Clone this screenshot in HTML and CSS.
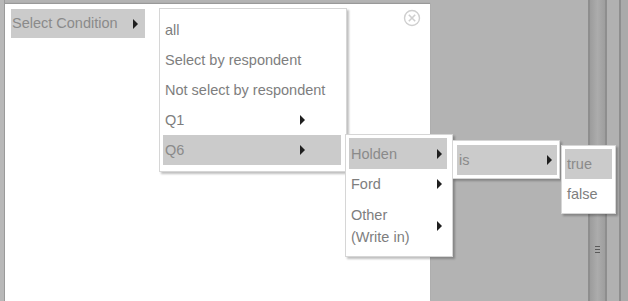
FILE: index.html
```html
<!DOCTYPE html>
<html lang="en">
<head>
    <meta charset="UTF-8">
    <meta name="viewport" content="width=device-width, initial-scale=1.0">
    <title>Select Condition</title>
    <link rel="stylesheet" href="styles.css">
</head>
<body>
    <div class="gutter"></div>
    <div class="panel">
        <svg class="close-icon" width="18" height="18" viewBox="0 0 18 18">
            <circle cx="9" cy="9" r="7.5" fill="none" stroke="#cfcfcf" stroke-width="1.4"/>
            <path d="M5.8 5.8 L12.2 12.2 M12.2 5.8 L5.8 12.2" stroke="#cfcfcf" stroke-width="1.6"/>
        </svg>
        <ul class="root">
            <li class="item active has-sub">Select Condition
                <ul class="menu menu-q">
                    <li class="item">all</li>
                    <li class="item">Select by respondent</li>
                    <li class="item">Not select by respondent</li>
                    <li class="item has-sub">Q1</li>
                    <li class="item active has-sub">Q6
                        <ul class="menu menu-a">
                            <li class="item active has-sub">Holden
                                <ul class="menu menu-op">
                                    <li class="item active has-sub">is
                                        <ul class="menu menu-val">
                                            <li class="item active">true</li>
                                            <li class="item">false</li>
                                        </ul>
                                    </li>
                                </ul>
                            </li>
                            <li class="item has-sub">Ford</li>
                            <li class="item has-sub">Other (Write in)</li>
                        </ul>
                    </li>
                </ul>
            </li>
        </ul>
    </div>
    <div class="canvas"></div>
    <div class="rail">
        <div class="rail-track">
            <span class="grip"></span>
        </div>
        <div class="rail-side"></div>
        <div class="rail-end"></div>
    </div>
</body>
</html>
```

FILE: styles.css
```css
body {
    margin: 0;
    height: 301px;
    display: flex;
    background: #b3b3b3;
    font-family: "Liberation Sans", Arial, sans-serif;
    font-size: 14.5px;
    color: #7e7e7e;
    overflow: hidden;
}
.gutter {
    width: 4px;
    border-right: 1px solid #9a9a9a;
    background: #b8b8b8;
}
.panel {
    position: relative;
    width: 419px;
    margin-top: 4px;
    padding: 5px 0 0 6px;
    background: #fff;
    box-shadow: 0 -1px 1px #999;
    z-index: 2;
}
.canvas {
    flex: 1;
}
.rail {
    display: flex;
    width: 40px;
}
.rail-track {
    width: 15px;
    border-left: 2px solid #8e8e8e;
    border-right: 2px solid #8e8e8e;
    background: linear-gradient(to right, #9c9c9c, #acacac 50%, #9e9e9e);
    display: flex;
    justify-content: center;
    padding-top: 246px;
}
.rail-side {
    width: 12px;
    background: #b1b1b1;
    border-right: 2px solid #8e8e8e;
}
.rail-end {
    flex: 1;
    background: #aaaaaa;
}
.grip {
    width: 5px;
    height: 7px;
    background: repeating-linear-gradient(to bottom, #5a5a5a 0 1px, transparent 1px 3px);
}
.close-icon {
    position: absolute;
    left: 398px;
    top: 5px;
}

ul {
    list-style: none;
    margin: 0;
    padding: 0;
}
.item {
    position: relative;
    padding: 4px 0 4px 2px;
    line-height: 22px;
    white-space: nowrap;
}
.item.active {
    background: #cbcbcb;
    color: #8a8a8a;
}
.has-sub::after {
    content: "";
    position: absolute;
    top: 50%;
    right: 7px;
    margin-top: -5px;
    border-left: 5px solid #1f1f1f;
    border-top: 5px solid transparent;
    border-bottom: 5px solid transparent;
}
.root > .item {
    width: 133px;
    padding: 3px 0 4px 1px;
}
.menu {
    position: absolute;
    top: -1px;
    left: calc(100% + 14px);
    background: #fff;
    border: 1px solid #d6d6d6;
    box-shadow: 2px 2px 2px rgba(0, 0, 0, 0.25);
    color: #7e7e7e;
    z-index: 3;
}
.menu-q {
    padding: 6px 5px 6px 3px;
}
.menu-q > .item {
    width: 176px;
}
.menu-q > .has-sub::after {
    right: 36px;
}
.menu-a {
    left: calc(100% + 4px);
    top: -1px;
    padding: 3px 5px 3px 3px;
}
.menu-a > .item {
    width: 74px;
    padding-right: 22px;
    white-space: normal;
}
.menu-a > .item:first-child {
    padding-top: 5px;
}
.menu-a > .item:last-child {
    padding-top: 5px;
    padding-bottom: 5px;
}
.menu-a > .has-sub::after {
    right: 5px;
}
.menu-op {
    left: calc(100% + 5px);
    top: 2px;
    padding: 4px 2px 3px 4px;
}
.menu-op > .item {
    width: 98px;
}
.menu-op > .has-sub::after {
    right: 5px;
}
.menu-val {
    left: calc(100% + 4px);
    top: 0;
    padding: 3px 3px 4px 3px;
}
.menu-val > .item {
    width: 45px;
}
```
